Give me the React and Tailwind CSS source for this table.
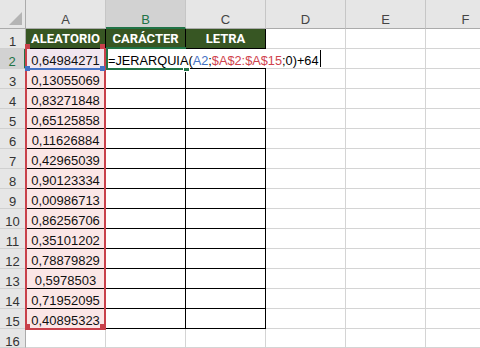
const numbers = [
  "0,64984271",
  "0,13055069",
  "0,83271848",
  "0,65125858",
  "0,11626884",
  "0,42965039",
  "0,90123334",
  "0,00986713",
  "0,86256706",
  "0,35101202",
  "0,78879829",
  "0,5978503",
  "0,71952095",
  "0,40895323",
];
const letters = ["A", "B", "C", "D", "E", "F"];
const titles = ["ALEATORIO", "CARÁCTER", "LETRA"];
const rows = Array.from({ length: 16 }, (_, i) => i + 1);

const ColHeader = ({ letter, selected }) =>
  selected ? (
    <div className="flex justify-center pt-[10px] leading-[20px] text-[13px] bg-[#d2d2d2] text-[#217346] border-r border-r-[#c6c6c6] border-b-2 border-b-[#217346]">
      {letter}
    </div>
  ) : (
    <div className="flex justify-center pt-[10px] leading-[20px] text-[13px] bg-[#e6e6e6] text-[#444] border-r border-r-[#c6c6c6] border-b border-b-[#ababab]">
      {letter}
    </div>
  );

const RowHeader = ({ n }) =>
  n === 2 ? (
    <div className="flex justify-center pt-[3px] leading-[19px] text-[13px] bg-[#d2d2d2] text-[#217346] border-r-2 border-r-[#217346] border-b border-b-[#d0d0d0]">
      {n}
    </div>
  ) : (
    <div className="flex justify-center pt-[3px] leading-[19px] text-[13px] bg-[#e6e6e6] text-[#333] border-r border-r-[#ababab] border-b border-b-[#d0d0d0]">
      {n}
    </div>
  );

const DataCell = ({ r, c }) => {
  // table A1:C15 gets thin black borders
  const inTable = r <= 15 && c <= 2;
  if (r === 1 && c <= 2) {
    return (
      <div className="bg-[#375623] text-white font-bold font-['Roboto',sans-serif] text-[13px] leading-[19px] text-center border-r border-b border-black">
        {titles[c]}
      </div>
    );
  }
  if (c === 0 && r >= 2 && r <= 15) {
    return (
      <div
        className={
          r === 2
            ? "bg-[#f1e6ef] text-[#111] text-[13px] leading-[19px] pt-[1.5px] text-center border-r border-b border-black"
            : "bg-[#fbe6e6] text-[#111] text-[13px] leading-[19px] pt-[1.5px] text-center border-r border-b border-black"
        }
      >
        {numbers[r - 2]}
      </div>
    );
  }
  return (
    <div
      className={
        inTable
          ? "bg-white border-r border-b border-black"
          : "bg-white border-r border-b border-[#d4d4d4]"
      }
    />
  );
};

// small square handle on a highlighted range corner
const Handle = ({ className }) => (
  <span className={"absolute w-[5px] h-[5px] " + className} />
);

export default function App() {
  return (
    <div className="relative w-[480px] h-[348px] overflow-hidden bg-white font-['Liberation_Sans',Arial,sans-serif]">
      <div className="grid grid-cols-[26px_repeat(6,80px)] grid-rows-[29px_repeat(15,20px)_19px] w-max">
        {/* corner */}
        <div className="flex items-end justify-end pr-[2px] pb-[3px] bg-[#e6e6e6] border-r border-b border-[#ababab]">
          <svg width="14" height="13" viewBox="0 0 14 13">
            <polygon points="13,0 13,13 0,13" fill="#b4b4b4" />
          </svg>
        </div>
        {letters.map((l, i) => (
          <ColHeader key={l} letter={l} selected={i === 1} />
        ))}
        {rows.map((r) => (
          <div key={r} className="contents">
            <RowHeader n={r} />
            {letters.map((l, c) => (
              <DataCell key={l} r={r} c={c} />
            ))}
          </div>
        ))}
      </div>

      {/* $A$2:$A$15 reference (red) */}
      <div className="absolute left-[25px] top-[48px] w-[81px] h-[282px] border-x-2 border-b-2 border-[#c8414b]">
        <Handle className="-left-[2px] -top-[4px] bg-[#c8414b]" />
        <Handle className="-right-[1px] -top-[4px] bg-[#c8414b]" />
        <Handle className="-left-[2px] -bottom-[1px] bg-[#c8414b]" />
        <Handle className="-right-[1px] -bottom-[1px] bg-[#c8414b]" />
        {/* A2 reference (blue) */}
        <div className="absolute left-0 right-0 top-[20px] h-[2px] bg-[#4472c4]">
          <Handle className="-left-[2px] -top-[2px] bg-[#4472c4]" />
          <Handle className="-right-[1px] -top-[2px] bg-[#4472c4]" />
        </div>
      </div>

      {/* active cell B2 in edit mode */}
      <div className="absolute left-[106px] top-[47px] w-[80px] h-[23px] border-2 border-r-0 border-[#217346]">
        <span className="absolute -right-[4px] -bottom-[4px] w-[7px] h-[7px] bg-[#217346] border border-white" />
      </div>
      <div className="absolute left-[108px] top-[49px] h-[19px] w-[214px] bg-white flex items-start">
        <span className="whitespace-nowrap text-[12.75px] leading-[19px] pt-[1.5px] text-black">
          =JERARQUIA(<span className="text-[#4472c4]">A2</span>;
          <span className="text-[#d0434d]">$A$2:$A$15</span>;0)+64
        </span>
        <span className="mt-[1px] ml-px w-px h-[17px] bg-black" />
      </div>
    </div>
  );
}
